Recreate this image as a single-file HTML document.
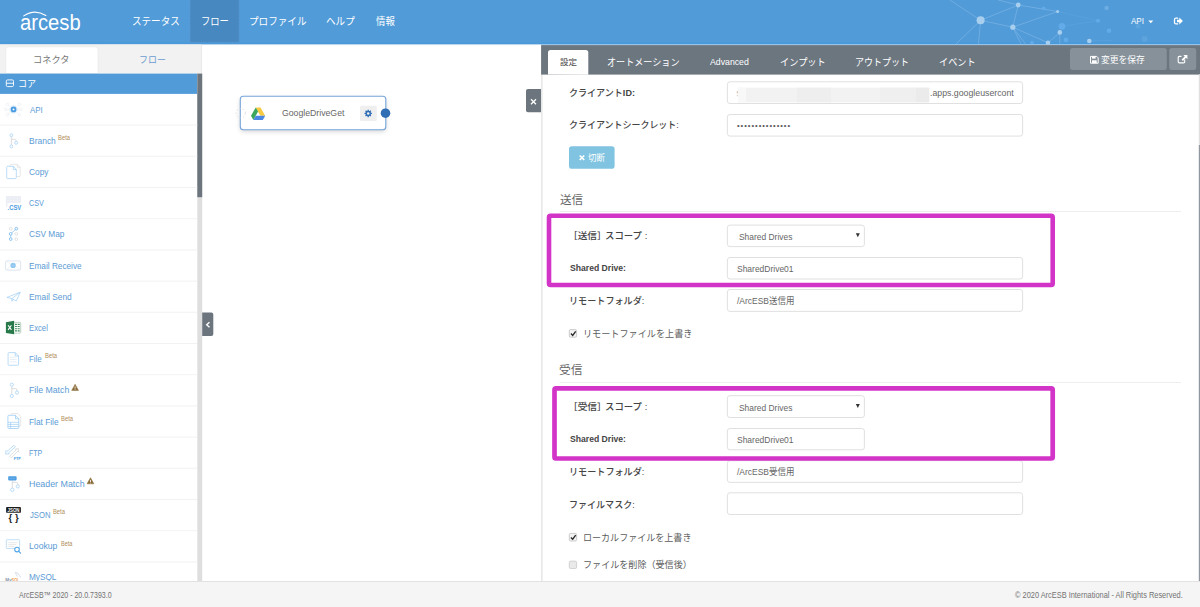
<!DOCTYPE html>
<html lang="ja">
<head>
<meta charset="utf-8">
<title>ArcESB - GoogleDriveGet</title>
<style>
*{box-sizing:border-box;margin:0;padding:0}
html,body{width:1200px;height:607px;overflow:hidden;background:#fff}
body{position:relative;font-family:"Liberation Sans","Noto Sans CJK JP",sans-serif;font-size:10px;color:#444}
#shapes{position:absolute;left:0;top:0;width:1200px;height:607px;display:block}
.t{position:absolute;left:0;top:0;display:block;white-space:nowrap;line-height:1;transform-origin:0 0;font-weight:400;font-style:normal;text-decoration:none;vertical-align:baseline}
.t b{font-weight:700}
#foot{position:absolute;left:0;top:581px;width:1200px;height:26px;background:#f5f5f5;border-top:1px solid #e2e2e2}
</style>
</head>
<body>
<svg id="shapes" width="1200" height="607" viewBox="0 0 1200 607">
<!-- page regions -->
<rect x="0" y="0" width="1200" height="607" fill="#fff"/>
<!-- header -->
<g id="header">
<rect x="0" y="0" width="1200" height="44.5" fill="#519bd8"/>
<rect x="0" y="42.6" width="1200" height="1.9" fill="#4a99db"/>
<rect x="190" y="0" width="49.2" height="42.4" fill="#4888c1"/>
<path d="M190.2 0V42.2H239V0" fill="none" stroke="#6aa0d4" stroke-width="0.6" stroke-dasharray="1.2 1.2"/>
<g stroke="#a5cdf0" stroke-width="0.7" fill="none" opacity="0.5">
  <path d="M980.6 20.3 L1018.2 5 L1012.8 27.2 Z"/>
  <path d="M1018.2 5 L1057.6 11.5 L1012.8 27.2 L1048 42.8"/>
  <path d="M1012.8 27.2 L1021 44 M1012.8 27.2 L1025.5 44"/>
  <path d="M980.6 20.3 L956 44 M980.6 20.3 L978.5 44 M980.6 20.3 L950 0 M1018.2 5 L998 0"/>
  <path d="M1059.8 32.4 L1048 42.8 M1059.8 32.4 L1059.8 44"/>
</g>
<g stroke="#6db0e8" stroke-width="0.6" fill="none" opacity="0.45">
  <path d="M1057.6 11.5 L1098 20.7 L1062 26.3 M1089.3 41 L1112 40.4"/>
</g>
<g fill="#a9cfef">
  <circle cx="980.6" cy="20.3" r="4"/><circle cx="1018.2" cy="5" r="2.4"/><circle cx="1012.8" cy="27.2" r="2.6"/>
  <circle cx="1057.6" cy="11.5" r="1.5"/><circle cx="1059.8" cy="32.4" r="2.3"/><circle cx="1048" cy="42.8" r="2.3"/><circle cx="1089.3" cy="41" r="2.3"/>
</g>
<g fill="#62abe8">
  <circle cx="1062" cy="26.3" r="3.4"/><circle cx="1066" cy="40" r="2.4"/><circle cx="1032" cy="42.8" r="2"/><circle cx="1043.6" cy="8.3" r="1.8"/><circle cx="1109" cy="30.8" r="2.3"/><circle cx="1098" cy="20.7" r="2"/>
</g>
<circle cx="1106.6" cy="7.9" r="2.2" fill="#74b2e4" opacity="0.8"/><g fill="#74b2e4" opacity="0.35"><circle cx="1144.5" cy="39" r="3"/><circle cx="1138" cy="26" r="2.5"/></g>
<!-- logo arc -->
<path d="M23.8 15.9 Q34.5 8.4 45.9 15.5" stroke="#fff" stroke-width="1.15" fill="none" stroke-linecap="round"/>
<!-- caret -->
<path d="M1148.3 20.6h5l-2.5 2.6z" fill="#fff"/>
<!-- logout icon -->
<path d="M1177.6 18.2h-1.6a1.5 1.5 0 0 0-1.500 1.500v2.700a1.500 1.500 0 0 0 1.500 1.500h1.600" stroke="#fff" stroke-width="1.300" fill="none" stroke-linecap="round"/>
<path d="M1177 19.800h2.300v-2.200l3.600 3.450-3.600 3.450v-2.200h-2.300z" fill="#fff"/>
</g>
<!-- sidebar -->
<g id="sidebar">
<rect x="0" y="44.5" width="201.6" height="29.1" fill="#f2f2f2"/>
<rect x="0" y="44.4" width="541" height="0.7" fill="#ececec"/><rect x="541" y="44.4" width="659" height="0.8" fill="#a9cdee"/>
<rect x="201.2" y="44.6" width="0.7" height="29" fill="#e2e2e2"/>
<path d="M5.9 73.6V49.400a2.500 2.500 0 0 1 2.500-2.500h87.100a2.500 2.500 0 0 1 2.500 2.500V73.600z" fill="#fff" stroke="#e8e8e8" stroke-width="0.600"/>
<rect x="0" y="73.600" width="197.300" height="20.300" fill="#519bd8"/>
<rect x="197.300" y="73.600" width="4.900" height="507.500" fill="#dedede"/>
<rect x="197.300" y="73.600" width="4.900" height="123.600" fill="#6c757d"/>
<rect x="6.300" y="79.900" width="7.200" height="6.700" rx="1.300" fill="none" stroke="#fff" stroke-width="0.900"/>
<path d="M6.300 83.250h7.200" stroke="#fff" stroke-width="0.900"/>
<path d="M0 125.1H197.3" stroke="#efefef" stroke-width="0.8"/>
<path d="M0 156.3H197.3" stroke="#efefef" stroke-width="0.8"/>
<path d="M0 187.5H197.3" stroke="#efefef" stroke-width="0.8"/>
<path d="M0 218.7H197.3" stroke="#efefef" stroke-width="0.8"/>
<path d="M0 249.9H197.3" stroke="#efefef" stroke-width="0.8"/>
<path d="M0 281.1H197.3" stroke="#efefef" stroke-width="0.8"/>
<path d="M0 312.3H197.3" stroke="#efefef" stroke-width="0.8"/>
<path d="M0 343.5H197.3" stroke="#efefef" stroke-width="0.8"/>
<path d="M0 374.7H197.3" stroke="#efefef" stroke-width="0.8"/>
<path d="M0 405.9H197.3" stroke="#efefef" stroke-width="0.8"/>
<path d="M0 437.1H197.3" stroke="#efefef" stroke-width="0.8"/>
<path d="M0 468.3H197.3" stroke="#efefef" stroke-width="0.8"/>
<path d="M0 499.5H197.3" stroke="#efefef" stroke-width="0.8"/>
<path d="M0 530.7H197.3" stroke="#efefef" stroke-width="0.8"/>
<path d="M0 561.9H197.3" stroke="#efefef" stroke-width="0.8"/>
<!-- API -->
<g id="ic-api">
 <g stroke="#e3e8ef" stroke-width="0.5" fill="none">
  <path d="M13.56 109.4L7.4 104.4M13.56 109.4L19.5 104.4M13.56 109.4H5.8M13.56 109.4H20.8M13.56 109.4L7.4 114.6M13.56 109.4L19.5 114.6"/>
 </g>
 <g fill="#fff" stroke="#e6eaf0" stroke-width="0.6">
  <circle cx="7.4" cy="104.4" r="1.3"/><circle cx="19.5" cy="104.4" r="1.3"/><circle cx="5.8" cy="109.4" r="1.3"/><circle cx="20.8" cy="109.4" r="1.3"/><circle cx="7.4" cy="114.6" r="1.3"/><circle cx="19.5" cy="114.6" r="1.3"/>
 </g>
 <circle cx="13.56" cy="109.4" r="4" fill="#fff"/>
 <circle cx="13.56" cy="109.4" r="3.6" fill="none" stroke="#c4e1f8" stroke-width="1.1" stroke-dasharray="1.3 0.9"/>
 <circle cx="13.56" cy="109.4" r="1.9" fill="none" stroke="#4a9be0" stroke-width="1.9"/>
</g>
<!-- Branch -->
<g id="ic-branch" fill="#fff" stroke-width="0.7">
 <path d="M11.35 136.7V145M11.35 139.3H14.800Q16.100 139.300 16.100 140.600V141.300" stroke="#cfcfcf" fill="none"/>
 <circle cx="11.350" cy="135.200" r="1.450" stroke="#9fcff5"/>
 <circle cx="11.350" cy="146.400" r="1.450" stroke="#9fcff5"/>
 <circle cx="16.100" cy="142.800" r="1.450" stroke="#9fcff5"/>
</g>
<!-- Copy -->
<g id="ic-copy" fill="#fff" stroke-width="0.7">
 <path d="M10.200 166V165.300a1 1 0 0 1 1-1h6l3 3v8.200a1 1 0 0 1-1 1h-2.700" stroke="#dcdcdc"/>
 <path d="M17.200 164.300v3h3" stroke="#dcdcdc" fill="none"/>
 <path d="M7.700 166.300h5.600l3 3.200v8.100a1 1 0 0 1-1 1H7.700a1 1 0 0 1-1-1v-10.300a1 1 0 0 1 1-1z" stroke="#9fcff5"/>
 <path d="M13.300 166.300v3.200h3" stroke="#9fcff5" fill="none"/>
</g>
<!-- CSV -->
<g id="ic-csv">
 <rect x="5.900" y="196.100" width="15" height="6.700" fill="#eaedf3"/>
 <rect x="5.900" y="202.800" width="1.500" height="4" fill="#eceef4"/>
 <path d="M5.900 198.300h15M5.900 200.500h15M9.600 196.100v6.700M13.400 196.100v6.700M17.200 196.100v6.700" stroke="#f4f5f9" stroke-width="0.400"/>
 <text x="7.600" y="209.500" font-family="Liberation Sans, sans-serif" font-weight="700" font-size="6.300" fill="#4a9be0" textLength="13.600" lengthAdjust="spacingAndGlyphs">.CSV</text>
</g>
<!-- CSV Map -->
<g id="ic-csvmap" fill="#fff" stroke-width="0.800">
 <path d="M10.700 233.900L16.300 228.700M10.700 233.900V239.100" stroke="#6cb2ec" stroke-width="0.600"/>
 <circle cx="10.700" cy="228.700" r="1.350" stroke="#dadada"/>
 <circle cx="16.300" cy="233.900" r="1.350" stroke="#dadada"/>
 <circle cx="16.300" cy="239.100" r="1.350" stroke="#dadada"/>
 <circle cx="16.300" cy="228.700" r="1.350" stroke="#6fb4ee"/>
 <circle cx="10.700" cy="233.900" r="1.350" stroke="#6fb4ee"/>
 <circle cx="10.700" cy="239.100" r="1.350" stroke="#6fb4ee"/>
</g>
<!-- Email Receive -->
<g id="ic-emailr">
 <rect x="5.600" y="260.900" width="15.100" height="9.200" rx="1.200" fill="#fff" stroke="#d3deeb" stroke-width="0.800"/>
 <path d="M6 261.300l7 4.200 7-4.200M6 269.800l5-3.800M20.300 269.800l-5-3.800" stroke="#e3e9f1" stroke-width="0.500" fill="none"/>
 <circle cx="13.100" cy="265.400" r="2.600" fill="#8bc4f0"/>
 <path d="M10.600 265.400h5M13.100 262.900v5" stroke="#b9dcf7" stroke-width="0.400"/>
</g>
<!-- Email Send -->
<g id="ic-emails" fill="none" stroke="#9fcff5" stroke-width="0.700" stroke-linejoin="round">
 <path d="M20.200 292.200L6.900 297.400l4.900 1.200L16.300 301z"/>
 <path d="M20.200 292.200L11.800 298.600v2.700l1.800-1.700" />
</g>
<!-- Excel -->
<g id="ic-excel">
 <rect x="13.500" y="322.400" width="7.200" height="10.700" rx="0.600" fill="#fff" stroke="#9bbfa8" stroke-width="0.700"/>
 <path d="M15 324.400h4.700M15 326.500h4.700M15 328.700h4.700M15 330.900h4.700" stroke="#3f8a5b" stroke-width="1.100"/>
 <path d="M17.400 323v10" stroke="#fff" stroke-width="0.700"/>
 <path d="M5.900 322.200L14.100 320.700V334.200L5.900 332.900z" fill="#27794a"/>
 <path d="M8.100 325.200l3.300 4.700M11.400 325.200l-3.300 4.700" stroke="#fff" stroke-width="1.100"/>
</g>
<!-- File -->
<g id="ic-file" fill="#fff" stroke-width="0.700">
 <path d="M9.100 352.600h6.200l3.300 3.400v8.300a1 1 0 0 1-1 1H9.100a1 1 0 0 1-1-1v-10.700a1 1 0 0 1 1-1z" stroke="#9fcff5"/>
 <path d="M15.300 352.600v3.400h3.300" stroke="#9fcff5" fill="none"/>
 <path d="M10 357.300h5.500M10 359.500h6.500M10 361.800h6.500" stroke="#d5e3f0" stroke-width="0.600"/>
</g>
<!-- File Match -->
<g id="ic-fmatch" fill="#fff" stroke-width="0.700">
 <path d="M11.800 386.300V394.400M11.800 388.600H15.600Q17 388.600 17 390V391" stroke="#cfcfcf" fill="none"/>
 <circle cx="11.800" cy="384.700" r="1.600" stroke="#9fcff5"/>
 <circle cx="11.800" cy="396" r="1.600" stroke="#9fcff5"/>
 <circle cx="17" cy="392.600" r="1.600" stroke="#9fcff5"/>
</g>
<!-- Flat File -->
<g id="ic-flat" fill="#fff" stroke-width="0.700">
 <path d="M11.200 415V414.500a1 1 0 0 1 1-1h5.500l3 3v8.500a1 1 0 0 1-1 1h-0.900" stroke="#dcdcdc"/>
 <path d="M8.900 415.300h6.600l3.300 3.400v8.800a1 1 0 0 1-1 1H8.900a1 1 0 0 1-1-1v-11.200a1 1 0 0 1 1-1z" stroke="#8fc6f2"/>
 <path d="M15.500 415.300v3.400h3.300" stroke="#8fc6f2" fill="none"/>
 <path d="M7.900 422.300h10.900M7.900 424.400h10.900M7.900 426.500h10.900M10.600 422.300v6.200" stroke="#8fc6f2" stroke-width="0.600" fill="none"/>
</g>
<!-- FTP -->
<g id="ic-ftp" fill="#fff" stroke-width="0.700" stroke-linejoin="round">
 <path d="M18.400 448.700l-3 0.300 0.800 0.900-6.600 6.300 1.700 1.600 6.300-6.500 0.900 0.900z" stroke="#d2d2d2"/>
 <path d="M5.700 454.100l3.600-0.300-0.900-0.900 7-6-1.500-1.600-7 6.200-0.900-0.900z" stroke="#9fcff5"/>
 <text x="13.700" y="459.700" font-family="Liberation Sans, sans-serif" font-weight="700" font-size="3.900" fill="#4a9be0" stroke="none" textLength="7.200" lengthAdjust="spacingAndGlyphs">FTP</text>
</g>
<!-- Header Match -->
<g id="ic-hmatch" fill="#fff" stroke-width="0.700">
 <path d="M12.300 480.400V488M12.300 482.300H16.400Q17.800 482.300 17.800 483.700V484.800" stroke="#cfcfcf" fill="none"/>
 <rect x="8.200" y="476.300" width="8.400" height="4.100" rx="0.800" fill="#4a9be0" stroke="none"/>
 <rect x="9.500" y="477.500" width="5.800" height="1.700" rx="0.500" fill="#63abe8" stroke="none"/>
 <circle cx="12.300" cy="489.800" r="1.700" stroke="#9fcff5"/>
 <circle cx="17.800" cy="486.400" r="1.600" stroke="#9fcff5"/>
</g>
<!-- JSON -->
<g id="ic-json">
 <rect x="6.100" y="507.100" width="14.800" height="5.700" rx="0.900" fill="#1c1c1c"/>
 <text x="7.500" y="511.700" font-family="Liberation Sans, sans-serif" font-weight="700" font-size="4.700" fill="#fff" textLength="12" lengthAdjust="spacingAndGlyphs">JSON</text>
 <text x="8.400" y="521.400" font-family="Liberation Sans, sans-serif" font-weight="700" font-size="9.500" fill="#1c1c1c" textLength="10.400" lengthAdjust="spacing">{ }</text>
</g>
<!-- Lookup -->
<g id="ic-lookup">
 <rect x="6.300" y="539.700" width="13.300" height="8.800" rx="0.700" fill="#fff" stroke="#a9d3f5" stroke-width="0.700"/>
 <path d="M8.300 542.700h9.300M8.300 544.600h8M8.300 546.400h6" stroke="#dedede" stroke-width="0.700"/>
 <circle cx="17" cy="549.600" r="2.300" fill="#fff" stroke="#55a6ea" stroke-width="1.100"/>
 <path d="M18.800 551.400l1.800 1.800" stroke="#55a6ea" stroke-width="1.200" stroke-linecap="round"/>
</g>
<!-- MySQL -->
<g id="ic-mysql">
 <path d="M14.900 572.200q3.200 0.300 4.500 3.300 0.900 1.600 1.700 2.100M15.600 573q0.600 2.400 2.200 3.600" stroke="#b9c7d6" stroke-width="0.600" fill="none"/>
 <text x="5.300" y="582.300" font-family="Liberation Sans, sans-serif" font-weight="700" font-size="6.200" fill="#8796ab" textLength="6.400" lengthAdjust="spacingAndGlyphs">My</text>
 <text x="11.800" y="582.300" font-family="Liberation Sans, sans-serif" font-weight="700" font-size="6.200" fill="#f1a050" textLength="7.400" lengthAdjust="spacingAndGlyphs">SQL</text>
</g>
<!-- warning triangles -->
<g id="ic-warn">
 <path d="M75.100 384.300l3.400 6.100h-6.800z" fill="#8a6d3b" stroke="#8a6d3b" stroke-width="0.500" stroke-linejoin="round"/>
 <path d="M75.100 386.500v2.100M75.100 389.300v0.600" stroke="#fff" stroke-width="0.800"/>
 <path d="M90.500 477.700l3.400 6.100h-6.800z" fill="#8a6d3b" stroke="#8a6d3b" stroke-width="0.500" stroke-linejoin="round"/>
 <path d="M90.500 479.900v2.100M90.500 482.700v0.600" stroke="#fff" stroke-width="0.800"/>
</g>

</g>
<!-- canvas -->
<g id="canvas">
<defs><filter id="blur" x="-20%" y="-50%" width="140%" height="200%"><feGaussianBlur stdDeviation="2.6"/></filter></defs>
<rect x="240.300" y="98.500" width="145.500" height="33" rx="3" fill="#000" opacity="0.17" filter="url(#blur)"/>
<rect x="240.300" y="96.250" width="145.500" height="33.450" rx="3" fill="#fff" stroke="#76a5da" stroke-width="1.1"/>
<circle cx="240.600" cy="113.200" r="4.700" fill="none" stroke="#d4d4d4" stroke-width="0.700" stroke-dasharray="1.500 1.900"/>
<path d="M255.700 107.500h4.800l4.700 8.200h-4.800z" fill="#f9c941"/>
<path d="M255.700 107.500l2.400 4.100-4.700 8.300-2.400-4.200z" fill="#3da65d"/>
<path d="M255.800 115.700h9.400l-2.400 4.200h-9.400z" fill="#4b87e4"/>
<rect x="360" y="105.700" width="16.800" height="15.300" rx="1.500" fill="#efefef"/>
<g transform="translate(368.200 113.450)" fill="#2f6db5">
 <circle r="2.700" />
 <g stroke="#2f6db5" stroke-width="1.300"><path d="M0-3.700V3.700M-3.700 0H3.700M-2.620-2.620L2.620 2.620M2.620-2.620L-2.620 2.620"/></g>
 <circle r="1.250" fill="#efefef"/>
</g>
<circle cx="385.500" cy="113.200" r="4.800" fill="#2f6db5"/>
<path d="M202.200 312.500h9.100a2 2 0 0 1 2 2v19.500a2 2 0 0 1-2 2h-9.100z" fill="#6c757d"/>
<path d="M209.500 322.200l-2.800 2.500 2.800 2.500" stroke="#fff" stroke-width="1.400" fill="none"/>
<path d="M541.200 89h-13.200a2 2 0 0 0-2 2v19.300a2 2 0 0 0 2 2h13.200z" fill="#6c757d"/>
<path d="M531 99.300l5 5M536 99.300l-5 5" stroke="#fff" stroke-width="1.300" fill="none"/>
</g>
<!-- panel -->
<g id="panel">
<rect x="541.100" y="74" width="1.500" height="507" fill="#e6e6e6"/>
<rect x="541.100" y="45.100" width="658.900" height="29.500" fill="#6c767f"/>
<path d="M548 74.600V52.400a2.500 2.500 0 0 1 2.500-2.500h35.300a2.500 2.500 0 0 1 2.500 2.500V74.800z" fill="#fff"/>
<rect x="1070" y="48.100" width="96.800" height="21.900" rx="2.500" fill="#86919a"/>
<rect x="1169.200" y="48.100" width="27" height="21.900" rx="2.500" fill="#86919a"/>
<!-- save icon -->
<path d="M1090.500 56.400h6.200l1.500 1.500v5.300h-7.700z" fill="none" stroke="#fff" stroke-width="1"/>
<rect x="1092" y="56.400" width="3.600" height="2.200" fill="#fff"/>
<rect x="1092" y="60.300" width="4.700" height="2.900" fill="#fff"/>
<!-- external link icon -->
<path d="M1184.700 59.600v2.200a1.100 1.100 0 0 1-1.100 1.100h-4.300a1.100 1.100 0 0 1-1.100-1.100v-4.300a1.100 1.100 0 0 1 1.100-1.100h2.200" stroke="#fff" stroke-width="1.100" fill="none"/>
<path d="M1183.300 55.100h4.100v4.100l-1.400-1.400-3.100 3.100-1.300-1.300 3.100-3.100z" fill="#fff"/>
<!-- right scrollbar -->
<rect x="1198.800" y="74.300" width="1.200" height="71" fill="#e0e0e0"/>
<rect x="1198.800" y="145" width="1.200" height="436" fill="#92989f"/>
<!-- inputs -->
<g fill="#fff" stroke="#dcdcdc" stroke-width="0.900">
<rect x="727.400" y="81.800" width="295.200" height="21.700" rx="2.500"/>
<rect x="727.400" y="114.500" width="295.200" height="21.600" rx="2.500"/>
<rect x="727.400" y="225.100" width="137" height="21.500" rx="2.500"/>
<rect x="727.400" y="257.500" width="295.200" height="21.500" rx="2.500"/>
<rect x="727.400" y="289.500" width="295.200" height="21.900" rx="2.500"/>
<rect x="727.400" y="395.700" width="137" height="21.800" rx="2.500"/>
<rect x="727.400" y="428.500" width="137" height="21.300" rx="2.500"/>
<rect x="727.400" y="460.700" width="295.200" height="21.700" rx="2.500"/>
<rect x="727.400" y="492.800" width="295.200" height="21.700" rx="2.500"/>
</g>
<!-- redaction -->
<rect x="738" y="87.700" width="191.200" height="14.600" fill="#f2f2f2"/>
<rect x="738" y="87.700" width="8" height="14.600" fill="#f8f8f8"/>
<rect x="797" y="87.700" width="34" height="14.600" fill="#eeeeee"/>
<rect x="880" y="87.700" width="36" height="14.600" fill="#efefef"/>
<rect x="916" y="87.700" width="13.200" height="14.600" fill="#ebebeb"/>
<path d="M737.300 91v2.500M737.300 95.200v1" stroke="#b9a58c" stroke-width="0.700"/>
<!-- password dots -->

<!-- disconnect button -->
<rect x="569" y="146.300" width="45.600" height="22.400" rx="2.800" fill="#80c4e1"/>
<path d="M579.700 155.500l4.500 4.500M584.200 155.500l-4.500 4.500" stroke="#fff" stroke-width="1.700" fill="none"/>
<!-- hr -->
<rect x="559.600" y="211" width="621.400" height="0.900" fill="#ececec"/>
<rect x="559.600" y="382" width="621.400" height="0.900" fill="#ececec"/>
<!-- select arrows -->
<path d="M855.800 233.300h4l-2 4z" fill="#333"/>
<path d="M855.800 404.100h4l-2 4z" fill="#333"/>
<!-- checkboxes -->
<g fill="#f3f3f3" stroke="#b9b9b9" stroke-width="0.700">
<rect x="569.300" y="329.600" width="7.300" height="7.600" rx="1.300"/>
<rect x="569.300" y="533.400" width="7.300" height="7.600" rx="1.300"/>
<rect x="569.300" y="561.100" width="7.300" height="7.400" rx="1.300" fill="#e9e9e9" stroke="#c4c4c4"/>
</g>
<path d="M570.900 333.600l1.800 1.800 3-4" stroke="#2a2a2a" stroke-width="1.350" fill="none"/>
<path d="M570.900 537.400l1.800 1.800 3-4" stroke="#2a2a2a" stroke-width="1.350" fill="none"/>
<!-- magenta highlight boxes -->
<rect x="549" y="215.700" width="503.700" height="69.300" rx="1.500" fill="none" stroke="#d334c8" stroke-width="4.600"/>
<rect x="554.500" y="388.300" width="498.200" height="70.200" rx="1.500" fill="none" stroke="#d334c8" stroke-width="4.700"/>
</g>
<!-- footer -->
<g id="footer">
<rect x="0" y="581.200" width="1200" height="25.800" fill="#f5f5f5"/>
<rect x="0" y="581" width="1200" height="0.800" fill="#e2e2e2"/>
</g>

</svg>
<header>
<div class="t" style="font-size:21.5px;color:#fff;transform:matrix(0.9413,0,0,1,20,13)">arcesb</div>
<a class="t" style="font-size:10.5px;color:#fff;transform:matrix(0.9105,0,0,1,132,16)">ステータス</a>
<a class="t" style="font-size:10.5px;color:#fff;transform:matrix(0.8855,0,0,1,201,16)">フロー</a>
<a class="t" style="font-size:10.5px;color:#fff;transform:matrix(0.9132,0,0,1,249,16)">プロファイル</a>
<a class="t" style="font-size:10.5px;color:#fff;transform:matrix(0.9114,0,0,1,326,16)">ヘルプ</a>
<a class="t" style="font-size:10px;color:#fff;transform:matrix(0.9376,0,0,1,376,17)">情報</a>
<div class="t" style="font-size:9.3px;color:#fff;transform:matrix(0.8646,0,0,1,1131,17)">API</div>
</header>
<aside>
<a class="t" style="font-size:9.5px;color:#777;transform:matrix(0.9707,0,0,1,33,55)">コネクタ</a>
<a class="t" style="font-size:9.5px;color:#6b9bd0;transform:matrix(0.9409,0,0,1,139,55)">フロー</a>
<div class="t" style="font-size:9.5px;color:#fff;transform:matrix(0.9542,0,0,1,18,79)">コア</div>
<a class="t" style="font-size:9.4px;color:#5b9bd5;transform:matrix(0.8436,0,0,1,30,105)">API</a>
<a class="t" style="font-size:9.4px;color:#5b9bd5;transform:matrix(0.9029,0,0,1,29,136)">Branch</a>
<sup class="t" style="font-size:7.5px;color:#b08d57;transform:matrix(0.7820,0,0,1,58,134)">Beta</sup>
<a class="t" style="font-size:9.4px;color:#5b9bd5;transform:matrix(0.8887,0,0,1,29,167)">Copy</a>
<a class="t" style="font-size:9.4px;color:#5b9bd5;transform:matrix(0.7718,0,0,1,29,198)">CSV</a>
<a class="t" style="font-size:9.4px;color:#5b9bd5;transform:matrix(0.8834,0,0,1,29,229)">CSV Map</a>
<a class="t" style="font-size:9.4px;color:#5b9bd5;transform:matrix(0.8783,0,0,1,29,261)">Email Receive</a>
<a class="t" style="font-size:9.4px;color:#5b9bd5;transform:matrix(0.8913,0,0,1,29,292)">Email Send</a>
<a class="t" style="font-size:9.4px;color:#5b9bd5;transform:matrix(0.8230,0,0,1,29,323)">Excel</a>
<a class="t" style="font-size:9.4px;color:#5b9bd5;transform:matrix(0.8398,0,0,1,29,354)">File</a>
<sup class="t" style="font-size:7.5px;color:#b08d57;transform:matrix(0.7820,0,0,1,45,352)">Beta</sup>
<a class="t" style="font-size:9.4px;color:#5b9bd5;transform:matrix(0.9310,0,0,1,29,385)">File Match</a>
<a class="t" style="font-size:9.4px;color:#5b9bd5;transform:matrix(0.8856,0,0,1,29,417)">Flat File</a>
<sup class="t" style="font-size:7.5px;color:#b08d57;transform:matrix(0.7820,0,0,1,61,415)">Beta</sup>
<a class="t" style="font-size:9.4px;color:#5b9bd5;transform:matrix(0.7491,0,0,1,29,448)">FTP</a>
<a class="t" style="font-size:9.4px;color:#5b9bd5;transform:matrix(0.9452,0,0,1,29,479)">Header Match</a>
<a class="t" style="font-size:9.4px;color:#5b9bd5;transform:matrix(0.8222,0,0,1,30,510)">JSON</a>
<sup class="t" style="font-size:7.5px;color:#b08d57;transform:matrix(0.7732,0,0,1,53,508)">Beta</sup>
<a class="t" style="font-size:9.4px;color:#5b9bd5;transform:matrix(0.9231,0,0,1,29,541)">Lookup</a>
<sup class="t" style="font-size:7.5px;color:#b08d57;transform:matrix(0.7382,0,0,1,61,540)">Beta</sup>
<a class="t" style="font-size:9.4px;color:#5b9bd5;transform:matrix(0.8766,0,0,1,29,572)">MySQL</a>
</aside>
<main>
<div class="t" style="font-size:9.8px;color:#666;transform:matrix(0.8882,0,0,1,282,108)">GoogleDriveGet</div>
</main>
<section>
<a class="t" style="font-size:8.5px;color:#444;transform:matrix(1.0005,0,0,1,560,58)">設定</a>
<a class="t" style="font-size:9.75px;color:#fff;transform:matrix(0.9326,0,0,1,607,58)">オートメーション</a>
<a class="t" style="font-size:9.8px;color:#fff;transform:matrix(0.8909,0,0,1,710,57)">Advanced</a>
<a class="t" style="font-size:9.75px;color:#fff;transform:matrix(0.9446,0,0,1,780,58)">インプット</a>
<a class="t" style="font-size:9.75px;color:#fff;transform:matrix(0.9248,0,0,1,855,58)">アウトプット</a>
<a class="t" style="font-size:9.75px;color:#fff;transform:matrix(0.9378,0,0,1,939,58)">イベント</a>
<span class="t" style="font-size:9px;color:#fff;transform:matrix(0.9746,0,0,1,1101,56)">変更を保存</span>
<label class="t" style="font-size:9.5px;color:#444;transform:matrix(0.9513,0,0,1,569,88);font-weight:500">クライアント<b>ID:</b></label>
<span class="t" style="font-size:9.3px;color:#666;transform:matrix(0.9424,0,0,1,930,89)">.apps.googleusercont</span>
<label class="t" style="font-size:9.5px;color:#444;transform:matrix(0.9444,0,0,1,569,120);font-weight:500">クライアントシークレット:</label>
<span class="t" style="font-size:7.5px;color:#5a5a5a;transform:matrix(1.0000,0,0,1,737,122);letter-spacing:0.98px">•••••••••••••••</span>
<span class="t" style="font-size:9px;color:#fff;transform:matrix(0.9396,0,0,1,588,154)">切断</span>
<h3 class="t" style="font-size:11.5px;color:#666;transform:matrix(1.0045,0,0,1,560,195)">送信</h3>
<label class="t" style="font-size:9px;color:#444;transform:matrix(1.0742,0,0,1,568,232);font-weight:500">［送信］</label>
<label class="t" style="font-size:9.25px;color:#444;transform:matrix(1.0157,0,0,1,605,232);font-weight:500">スコープ :</label>
<span class="t" style="font-size:9.3px;color:#666;transform:matrix(0.9064,0,0,1,739,233)">Shared Drives</span>
<label class="t" style="font-size:8.6px;color:#444;transform:matrix(1.0019,0,0,1,570,264);font-weight:700">Shared Drive:</label>
<span class="t" style="font-size:9.3px;color:#666;transform:matrix(0.9114,0,0,1,737,265)">SharedDrive01</span>
<label class="t" style="font-size:9.5px;color:#444;transform:matrix(0.9578,0,0,1,569,296);font-weight:500">リモートフォルダ:</label>
<span class="t" style="font-size:9.3px;color:#666;transform:matrix(0.9101,0,0,1,737,297)">/ArcESB送信用</span>
<label class="t" style="font-size:9.5px;color:#5c5c5c;transform:matrix(0.9598,0,0,1,583,329)">リモートファイルを上書き</label>
<h3 class="t" style="font-size:11.5px;color:#666;transform:matrix(1.0203,0,0,1,559,365)">受信</h3>
<label class="t" style="font-size:9px;color:#444;transform:matrix(1.0742,0,0,1,568,403);font-weight:500">［受信］</label>
<label class="t" style="font-size:9.25px;color:#444;transform:matrix(1.0157,0,0,1,605,403);font-weight:500">スコープ :</label>
<span class="t" style="font-size:9.3px;color:#666;transform:matrix(0.9064,0,0,1,739,404)">Shared Drives</span>
<label class="t" style="font-size:8.6px;color:#444;transform:matrix(1.0019,0,0,1,570,435);font-weight:700">Shared Drive:</label>
<span class="t" style="font-size:9.3px;color:#666;transform:matrix(0.9114,0,0,1,737,436)">SharedDrive01</span>
<label class="t" style="font-size:9.5px;color:#444;transform:matrix(0.9578,0,0,1,569,467);font-weight:500">リモートフォルダ:</label>
<span class="t" style="font-size:9.3px;color:#666;transform:matrix(0.9101,0,0,1,737,468)">/ArcESB受信用</span>
<label class="t" style="font-size:9.5px;color:#444;transform:matrix(0.9503,0,0,1,569,500);font-weight:500">ファイルマスク:</label>
<label class="t" style="font-size:9.5px;color:#5c5c5c;transform:matrix(0.9513,0,0,1,583,533)">ローカルファイルを上書き</label>
<label class="t" style="font-size:9.5px;color:#5c5c5c;transform:matrix(0.9540,0,0,1,583,560)">ファイルを削除（受信後）</label>
</section>
<footer>
<div id="foot"></div>
<div class="t" style="font-size:8.7px;color:#737373;transform:matrix(0.8086,0,0,1,19,591)">ArcESB™ 2020 - 20.0.7393.0</div>
<div class="t" style="font-size:8.7px;color:#737373;transform:matrix(0.8527,0,0,1,1015,591)">© 2020 ArcESB International - All Rights Reserved.</div>
</footer>
</body>
</html>
